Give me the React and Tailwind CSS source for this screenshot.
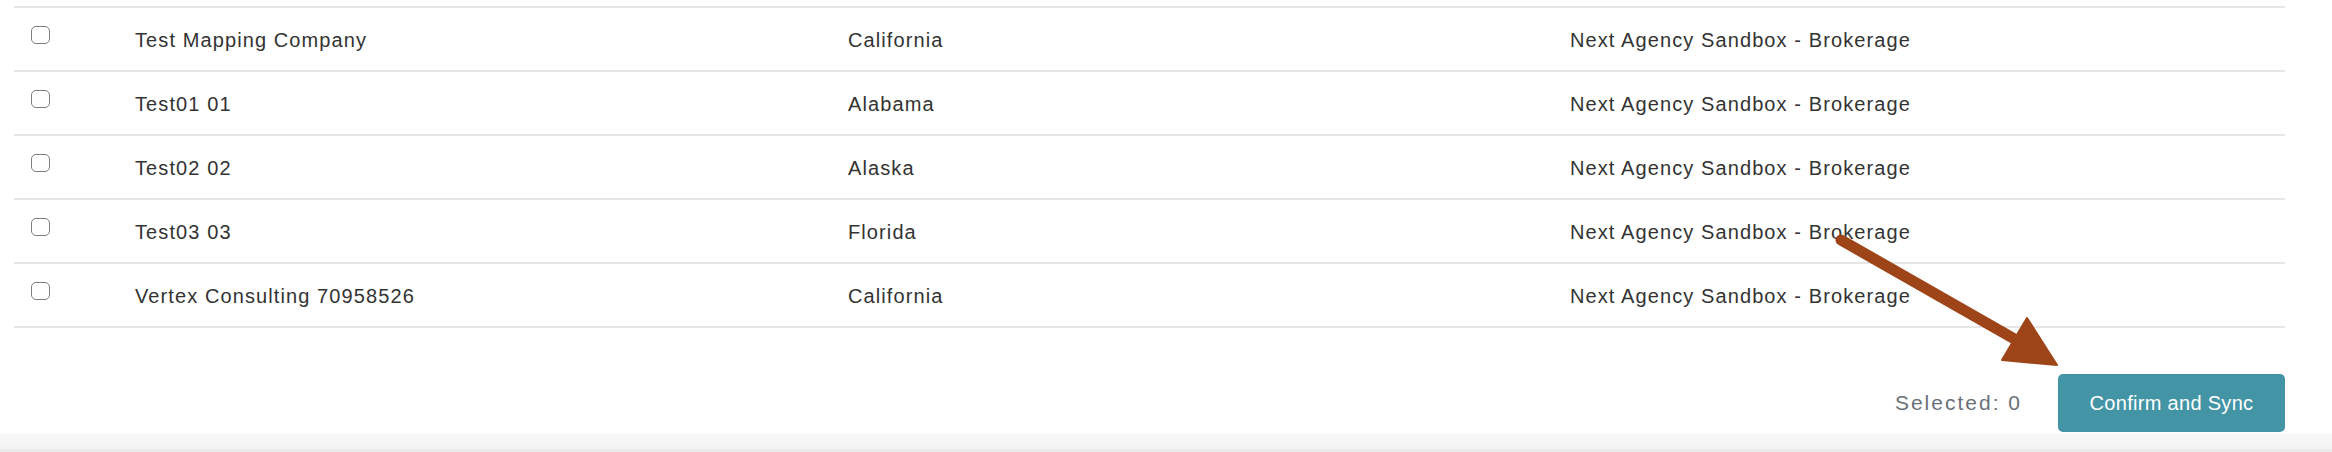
const rows = [
  { name: 'Test Mapping Company', state: 'California', agency: 'Next Agency Sandbox - Brokerage' },
  { name: 'Test01 01', state: 'Alabama', agency: 'Next Agency Sandbox - Brokerage' },
  { name: 'Test02 02', state: 'Alaska', agency: 'Next Agency Sandbox - Brokerage' },
  { name: 'Test03 03', state: 'Florida', agency: 'Next Agency Sandbox - Brokerage' },
  { name: 'Vertex Consulting 70958526', state: 'California', agency: 'Next Agency Sandbox - Brokerage' },
];

const App = () => {
  return (
    <div className="relative h-[452px] w-[2332px] overflow-hidden bg-white font-['Liberation_Sans',Arial,sans-serif]">
      <div className="pl-[14px] pr-[47px] pt-[6px]">
        <div className="border-t-2 border-[#e6e6e6]">
          {rows.map((row) => (
            <div
              key={row.name}
              className="grid h-[64px] grid-cols-[121px_713px_722px_1fr] items-center border-b-2 border-[#e6e6e6] text-[20px] tracking-[1.1px] text-[#333]"
            >
              <div className="self-start pl-[17px] pt-[18px]">
                <span className="block h-[18px] w-[19px] rounded-[5px] border-[1.5px] border-[#7d7d7d] bg-white" />
              </div>
              <span className="pt-[2px]">{row.name}</span>
              <span className="pt-[2px]">{row.state}</span>
              <span className="pt-[2px]">{row.agency}</span>
            </div>
          ))}
        </div>

        <div className="mt-[46px] flex items-center justify-end gap-[36px]">
          <span className="text-[21px] tracking-[2px] text-[#6b7078]">Selected: 0</span>
          <button
            type="button"
            className="h-[58px] w-[227px] rounded-[5px] bg-[#4395a5] text-[20px] tracking-[0.3px] text-white"
          >
            Confirm and Sync
          </button>
        </div>
      </div>

      <div className="mt-[1px] h-[19px] border-b-[3px] border-[#ebebeb] bg-gradient-to-b from-[#f9f9f9] to-[#f4f4f4]" />

      {/* annotation arrow */}
      <svg className="absolute left-[1830px] top-[230px]" width="240" height="150" viewBox="0 0 240 150">
        <line x1="11" y1="10" x2="188" y2="111" stroke="#9d4519" strokeWidth="11" strokeLinecap="round" />
        <polygon points="227,135 172,130 197,88" fill="#9d4519" stroke="#9d4519" strokeWidth="2" strokeLinejoin="round" />
      </svg>
    </div>
  );
};

export default App;
